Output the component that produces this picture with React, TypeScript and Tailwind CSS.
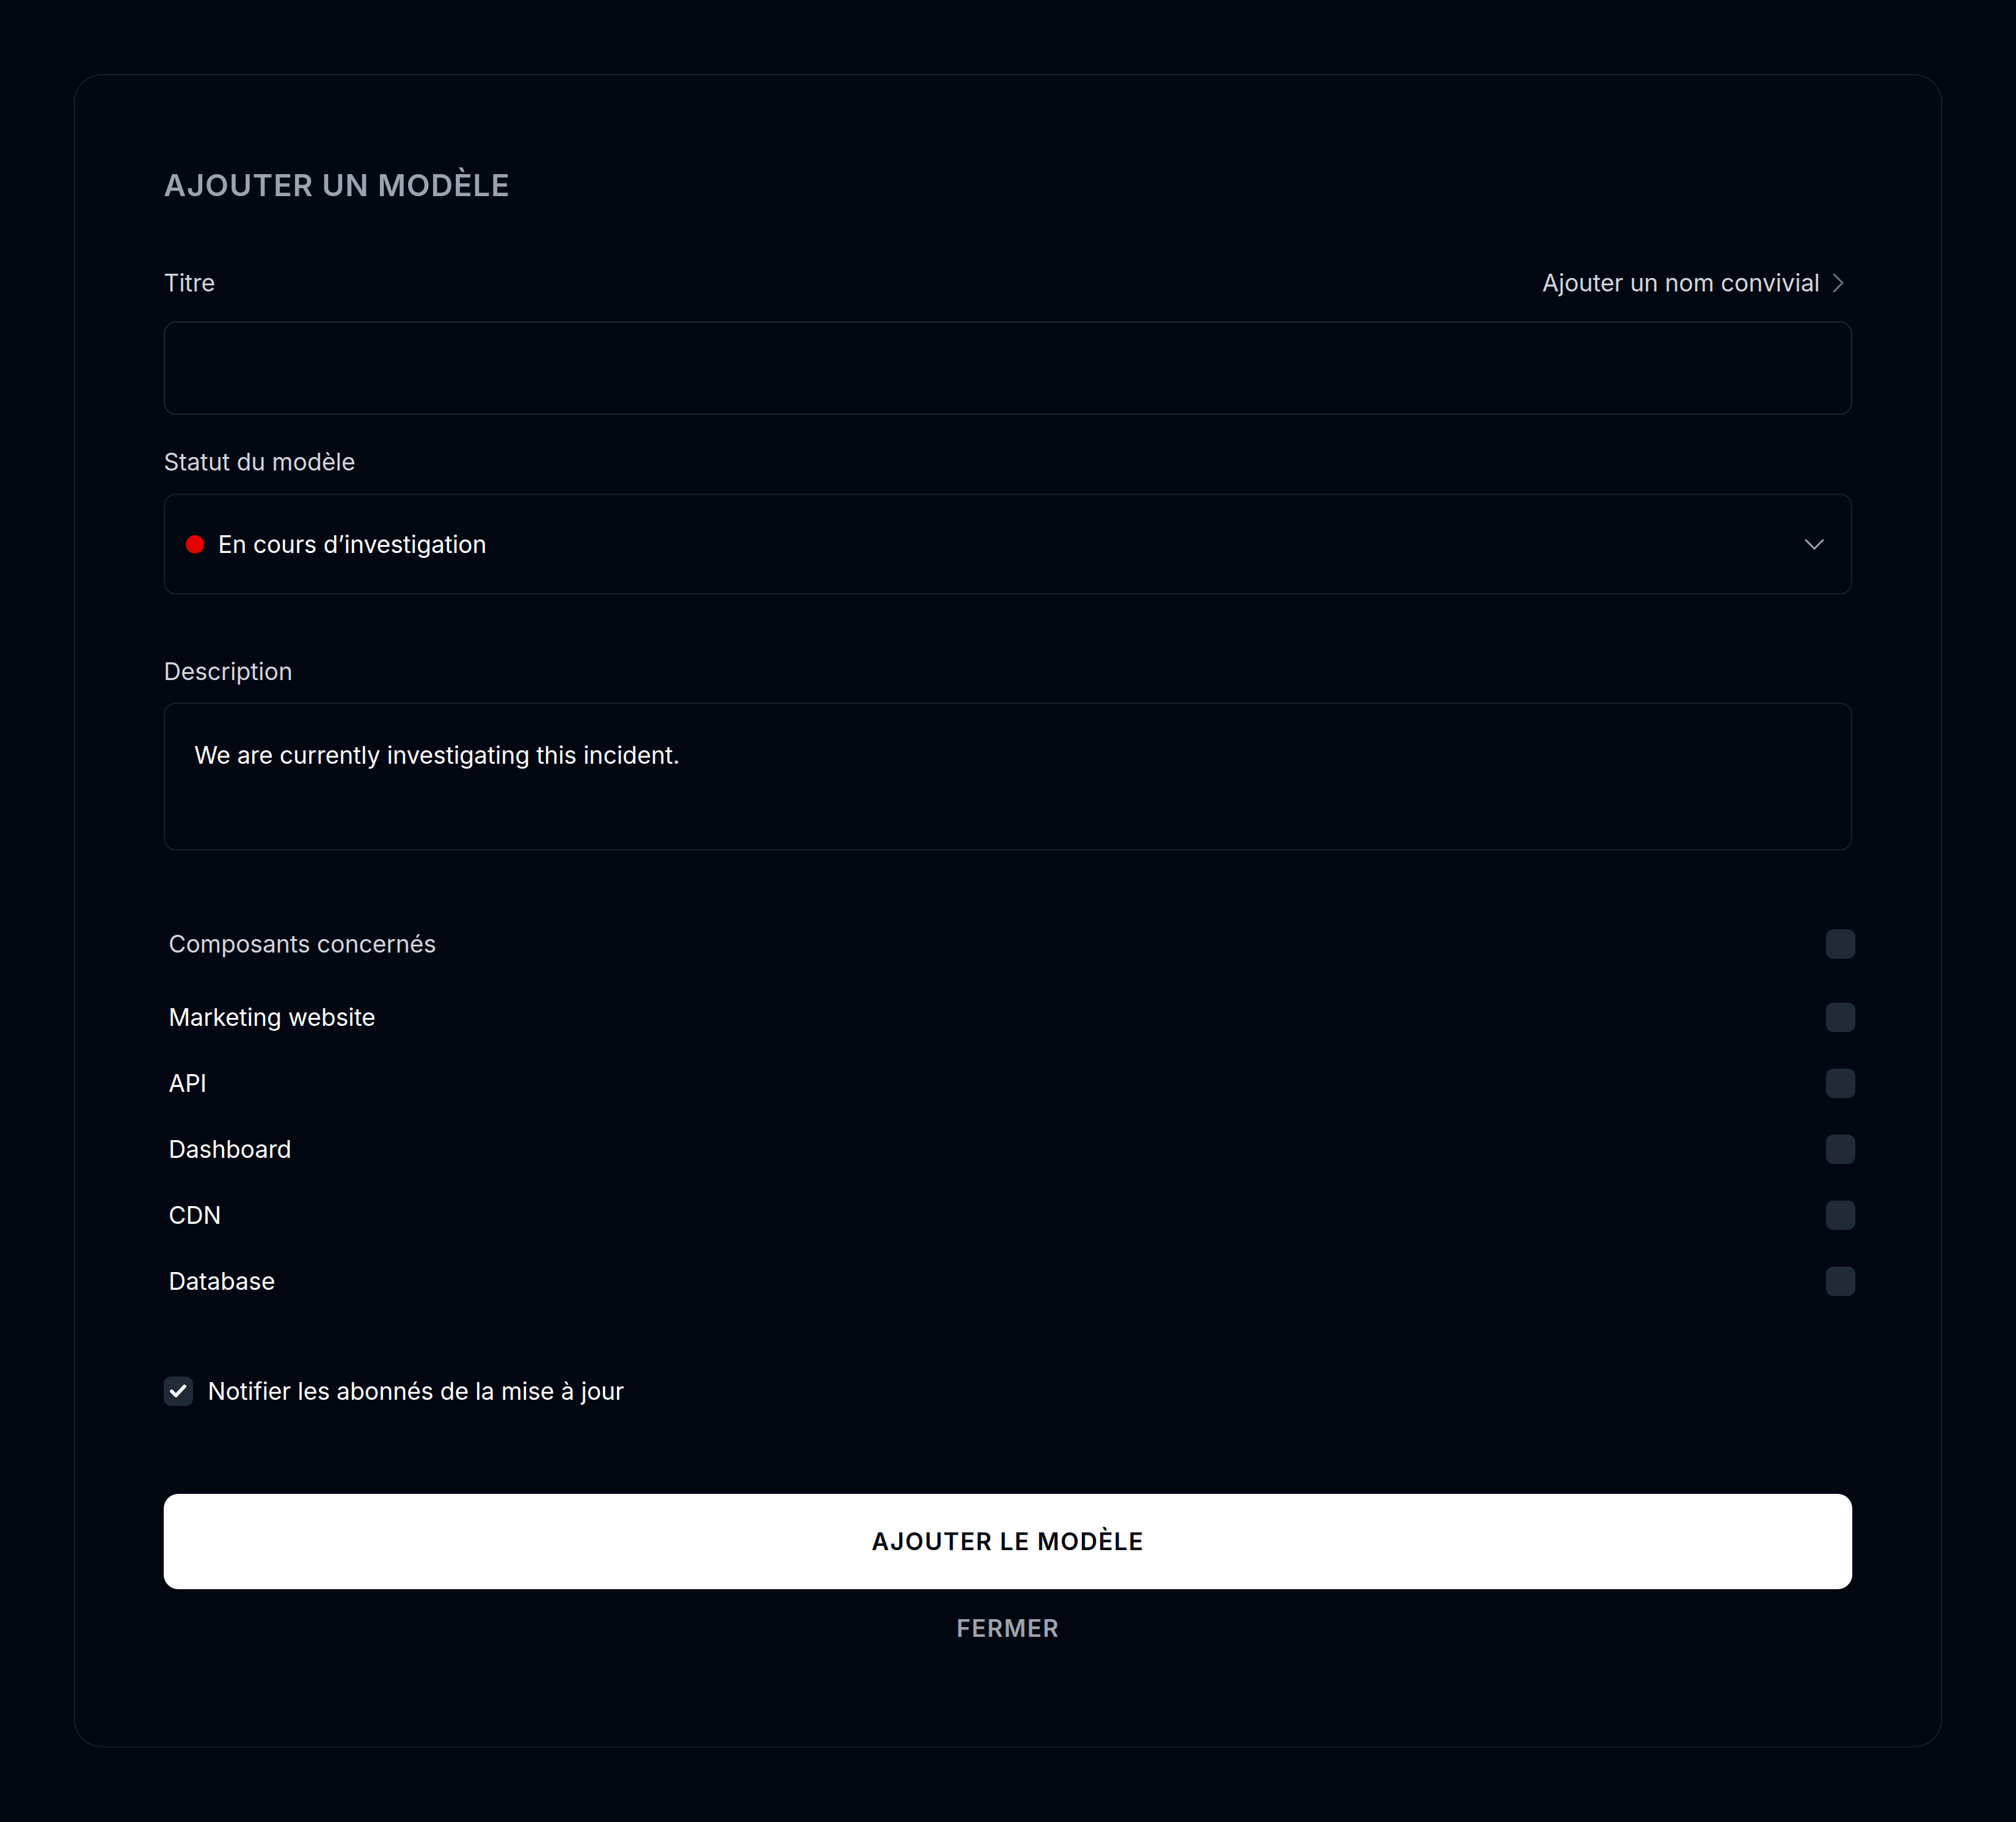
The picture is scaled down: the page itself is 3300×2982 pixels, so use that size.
import React, { useState } from "react"

type Component = {
  id: string
  name: string
}

const components: Component[] = [
  { id: "marketing", name: "Marketing website" },
  { id: "api", name: "API" },
  { id: "dashboard", name: "Dashboard" },
  { id: "cdn", name: "CDN" },
  { id: "database", name: "Database" },
]

const ChevronRight = () => (
  <svg width="20" height="32" viewBox="0 0 20 32" fill="none">
    <polyline points="3,2 17,16 3,30" stroke="#6b7280" strokeWidth="3" strokeLinecap="round" strokeLinejoin="round" />
  </svg>
)

const ChevronDown = () => (
  <svg width="32" height="18" viewBox="0 0 32 18" fill="none">
    <polyline points="2,2 16,16 30,2" stroke="#9ca3af" strokeWidth="3" strokeLinecap="round" strokeLinejoin="round" />
  </svg>
)

const Box = ({ checked, onClick }: { checked: boolean; onClick: () => void }) => (
  <button
    type="button"
    onClick={onClick}
    className="flex h-[48px] w-[48px] shrink-0 items-center justify-center rounded-[12px] bg-[#212a37]"
  >
    {checked && (
      <svg width="48" height="48" viewBox="0 0 48 48" fill="none">
        <polyline points="13,24 20,31 34,16" stroke="#ffffff" strokeWidth="5.5" strokeLinecap="round" strokeLinejoin="round" />
      </svg>
    )}
  </button>
)

export default function App() {
  const [selected, setSelected] = useState<string[]>([])
  const [notify, setNotify] = useState(true)
  const [allSelected, setAllSelected] = useState(false)

  const toggle = (id: string) => {
    setSelected((prev) => (prev.includes(id) ? prev.filter((x) => x !== id) : [...prev, id]))
  }

  return (
    <div className="min-h-screen bg-[#030712] py-[121px] font-[Inter,'Noto_Sans',sans-serif]">
      <div className="mx-auto flex w-[3058px] flex-col rounded-[46px] border-2 border-[#161c28] bg-[#030712] px-[145px] pt-[155px] pb-[174px]">
        <h1 className="text-[50px] leading-[50px] font-semibold tracking-wide text-[#9ca3af]">
          AJOUTER UN MODÈLE
        </h1>

        {/* Titre */}
        <div className="mt-[116px] flex items-center justify-between text-[39px] leading-[38px]">
          <span className="text-[#d1d5db]">Titre</span>
          <button type="button" className="mr-[13px] flex items-center gap-[20px] text-[#d1d5db]">
            <span>Ajouter un nom convivial</span>
            <ChevronRight />
          </button>
        </div>
        <input
          type="text"
          className="mt-[44px] h-[153px] w-full rounded-[20px] border-2 border-[#1f2733] bg-transparent px-[49px] text-[39px] text-white outline-none"
        />

        {/* Statut */}
        <span className="mt-[58px] text-[39px] leading-[38px] text-[#d1d5db]">Statut du modèle</span>
        <div className="mt-[33px] flex h-[165px] items-center justify-between rounded-[20px] border-2 border-[#1a212d] pl-[34px] pr-[44px]">
          <div className="flex items-center gap-[23px]">
            <span className="h-[30px] w-[30px] rounded-full bg-[#e60000]" />
            <span className="text-[39px] leading-[38px] text-white">En cours d’investigation</span>
          </div>
          <ChevronDown />
        </div>

        {/* Description */}
        <span className="mt-[107px] text-[39px] leading-[38px] text-[#d1d5db]">Description</span>
        <div className="mt-[32px] h-[242px] rounded-[20px] border-2 border-[#1a212d] pl-[48px] pt-[65px]">
          <p className="text-[39px] leading-[38px] text-white">We are currently investigating this incident.</p>
        </div>

        {/* Composants */}
        <div className="-mr-[5px] mt-[129px] flex flex-col gap-[60px] pl-[8px]">
          <div className="mb-[12px] flex h-[48px] items-center justify-between">
            <span className="text-[39px] leading-[38px] text-[#d1d5db]">Composants concernés</span>
            <Box checked={allSelected} onClick={() => setAllSelected((v) => !v)} />
          </div>
          {components.map((c) => (
            <div key={c.id} className="flex h-[48px] items-center justify-between">
              <span className="text-[39px] leading-[38px] text-white">{c.name}</span>
              <Box checked={selected.includes(c.id)} onClick={() => toggle(c.id)} />
            </div>
          ))}
        </div>

        {/* Notifier */}
        <div className="mt-[132px] flex h-[48px] items-center gap-[24px]">
          <Box checked={notify} onClick={() => setNotify((v) => !v)} />
          <span className="text-[39px] leading-[38px] text-white">Notifier les abonnés de la mise à jour</span>
        </div>

        <button
          type="button"
          className="mt-[144px] h-[156px] w-full rounded-[24px] bg-white text-[39px] leading-[38px] font-semibold tracking-wider text-[#030712]"
        >
          AJOUTER LE MODÈLE
        </button>
        <button
          type="button"
          className="mt-[45px] text-center text-[39px] leading-[38px] font-semibold tracking-wider text-[#9ca3af]"
        >
          FERMER
        </button>
      </div>
    </div>
  )
}
